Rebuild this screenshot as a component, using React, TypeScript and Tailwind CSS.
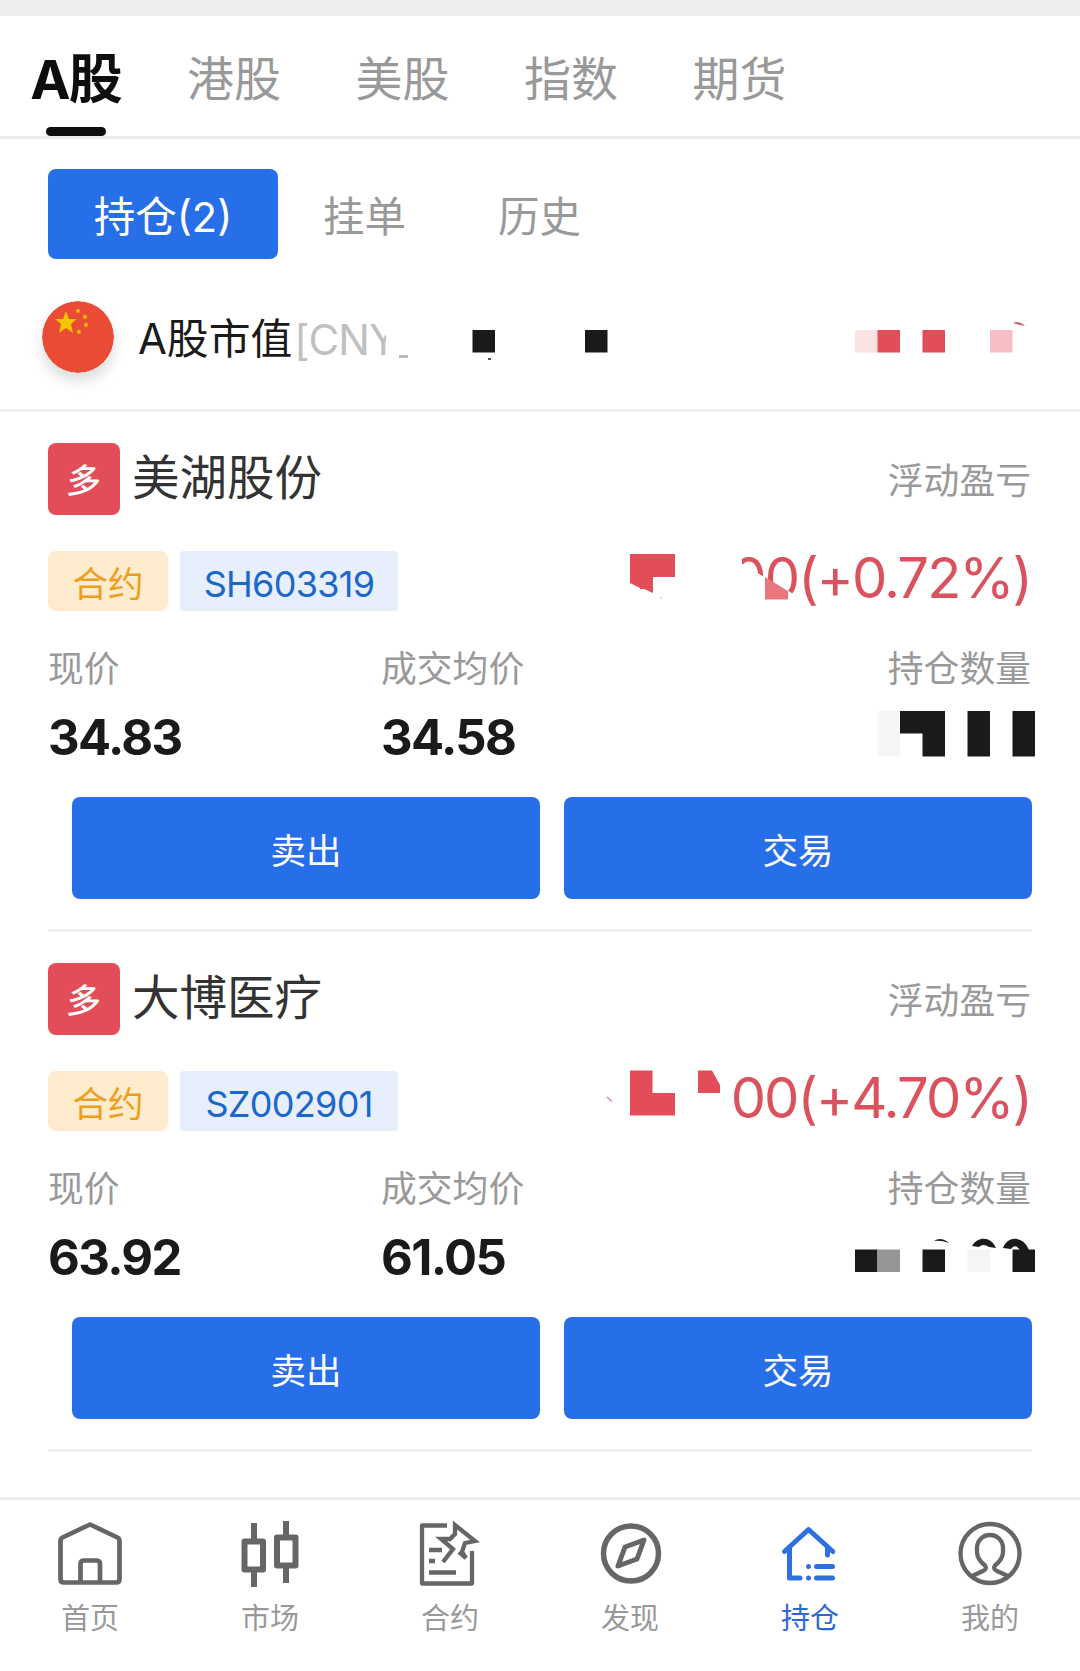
import type { ReactNode } from "react";

interface Tab {
  label: string;
  icon: ReactNode;
}

interface Position {
  name: string;
  code: string;
  profit: string;
  price: string;
  average: string;
  profitMask: ReactNode;
  amountMask: ReactNode;
}

const MARKETS = ["港股", "美股", "指数", "期货"];

const POSITIONS: Position[] = [
  {
    name: "美湖股份",
    code: "SH603319",
    profit: "00(+0.72%)",
    price: "34.83",
    average: "34.58",
    // Coordinates are relative to x=600 and the top of the row
    profitMask: (
      <>
        <path d="M125 0H142V18L197 50V70H125Z" fill="#fff" />
        <path d="M165 31L188 45V53.500H165Z" fill="#e8767f" />
        <path d="M30 8H75V31H53V47L44 43H40V42L30 37Z" fill="#e34d59" />
        <circle cx="61" cy="52" r="1" fill="#f2c4c8" />
      </>
    ),
    amountMask: (
      <>
        <path d="M27.500 5H50V50.500H27.500Z" fill="#f6f6f6" />
        <path d="M50 5H95V50.500H72.500V27.500H50ZM117.500 5H140V50.500H117.500ZM162.500 5H185V50.500H162.500Z" fill="#1a1a1a" />
      </>
    ),
  },
  {
    name: "大博医疗",
    code: "SZ002901",
    profit: "00(+4.70%)",
    price: "63.92",
    average: "61.05",
    profitMask: (
      <>
        <path d="M30 4.500H52.500V27H75V49.500H30ZM98 4.500H112L120 19V27H98Z" fill="#e34d59" />
        <path d="M7 31L12 35.500" stroke="#e8868e" strokeWidth="1.500" />
      </>
    ),
    amountMask: (
      <>
        <path d="M5 23.500H27.500V46H5ZM72.500 23.500H95V46H72.500ZM162.500 23.500H185V46H162.500Z" fill="#1a1a1a" />
        <path d="M27.500 23.500H50V46H27.500Z" fill="#969696" />
        <path d="M117.500 23.500H140V46H117.500Z" fill="#f5f5f5" />
        <path d="M84 15Q91 10 99 17Q91 14 84 15ZM122 20C128 10 141 10 146 22L139 21Q133 17 129 21ZM153 22C158 9 174 10 179 24H170Q165 17 161 23Z" fill="#1a1a1a" />
      </>
    ),
  },
];

const TABS: Tab[] = [
  {
    label: "首页",
    icon: (
      <g strokeWidth="4.700" strokeLinejoin="round">
        <path d="M40 8.500L67.500 21.500Q69.500 22.500 69.500 25V63Q69.500 66.500 66 66.500H14Q10.500 66.500 10.500 63V25Q10.500 22.500 12.500 21.500Z" />
        <path d="M30.500 66V48Q30.500 44.500 34 44.500H46Q50 44.500 50 48V66" />
      </g>
    ),
  },
  {
    label: "市场",
    icon: (
      <g strokeWidth="6">
        <path d="M24 7V25M24 55V71M56 5V21M56 51V67" />
        <path d="M14.500 25.500H33V53.500H14.500ZM47 21.500H65.500V49.500H47Z" strokeLinejoin="round" />
      </g>
    ),
  },
  {
    label: "合约",
    icon: (
      <g strokeWidth="4.300">
        <path d="M37 9.500H12V67.500H62V35" strokeLinejoin="round" />
        <path d="M19 34H32M19 45H25M19 56.500H46" />
        <path d="M33 46L43 33L31 23H40L45 18V9L65 25L55 27L52 36L56 42L49 36" />
      </g>
    ),
  },
  {
    label: "发现",
    icon: (
      <g strokeWidth="5.500">
        <circle cx="41" cy="37.500" r="27.500" />
        <path d="M54 24L35 31L28 50L47 43Z" strokeWidth="5" strokeLinejoin="round" />
      </g>
    ),
  },
  {
    label: "持仓",
    icon: (
      <g strokeWidth="5" strokeLinecap="round" strokeLinejoin="round">
        <path d="M14.500 35.500L38.500 13.500L62.800 35.500M19.500 32V62H30M57.500 32V39" />
        <path d="M38.500 50.500V50.500M46.500 50.500H62.500M38.500 62V62M46.500 62H62.500" />
      </g>
    ),
  },
  {
    label: "我的",
    icon: (
      <g strokeWidth="4.300">
        <circle cx="40" cy="37.500" r="29.500" />
        <path d="M22 60L33 55Q37.500 53 35 49.500Q27 43 27 36V32A13 13 0 0 1 53 32V36Q53 43 45 49.500Q42.500 53 47 55L58 60" />
      </g>
    ),
  },
];

function FlagIcon() {
  return (
    <svg
      className="h-[72px] w-[72px] shrink-0 rounded-full shadow-[0_8px_14px_rgba(0,0,0,0.14)]"
      viewBox="0 0 72 72"
    >
      <circle cx="36" cy="36" r="36" fill="#e94b35" />
      <g fill="#f2c500">
        <path d="M24 10L27 18H35L29 23L31 32L24 27L17 32L19 23L13 18H21Z" />
        <path id="star" d="M36 7l.8 1.800 2 .2-1.500 1.300.4 2-1.700-1-1.700 1 .4-2-1.500-1.300 2-.2z" />
        <use href="#star" x="7" y="6" />
        <use href="#star" x="8" y="14" />
        <use href="#star" x="1" y="21" />
      </g>
    </svg>
  );
}

function PositionCard({ position }: { position: Position }) {
  return (
    <section className="mx-12 flex h-[520px] flex-col border-b-3 border-[#efefef] pt-[31px]">
      <div className="flex h-[72px] items-center">
        <span className="flex h-[72px] w-[72px] items-center justify-center rounded-lg bg-[#e34d59] text-[34px] font-medium text-white">
          <span className="translate-y-[2px] -skew-x-6">多</span>
        </span>
        <h2 className="ml-3 pb-[2px] text-[47.5px] leading-[70px] text-[#333]">{position.name}</h2>
        <span className="mr-px ml-auto pt-[6px] text-[35.8px] text-[#999]">浮动盈亏</span>
      </div>

      <div className="relative mt-9 flex h-[60px] items-center">
        <span className="flex h-[60px] w-[120px] items-center justify-center rounded-lg bg-[#ffeccf] pt-[7px] text-[35.5px] text-[#eb9f1c]">
          合约
        </span>
        <span className="ml-3 flex h-[60px] w-[218px] items-center justify-center rounded bg-[#e7effd] pt-[5px] text-[36px] tracking-[-0.7px] text-[#1c67c9]">
          {position.code}
        </span>
        <span className="mr-px ml-auto pb-[7px] text-[56px] tracking-[-1.9px] text-[#d9525d]">
          {position.profit}
        </span>
        <svg className="absolute -top-[5px] left-[552px] h-[70px] w-[432px]" viewBox="0 0 432 70">
          {position.profitMask}
        </svg>
      </div>

      <div className="mt-[31px] flex h-[54px] items-center pt-px text-[35.8px] text-[#999]">
        <span className="w-[333px]">现价</span>
        <span>成交均价</span>
        <span className="mr-px ml-auto">持仓数量</span>
      </div>
      <div className="relative mt-[10px] flex h-[60px] items-center pt-[2px] text-[49px] font-bold tracking-[-1.6px] text-[#1a1a1a]">
        <span className="w-[333px]">{position.price}</span>
        <span>{position.average}</span>
        <svg className="absolute top-0 left-[802px] h-[60px] w-[185px]" viewBox="0 0 185 60">
          {position.amountMask}
        </svg>
      </div>

      <div className="mt-[31px] ml-6 flex gap-6 text-[35.5px] text-white">
        <button className="h-[102px] flex-1 rounded-lg bg-[#276fe8] pt-[7px]">卖出</button>
        <button className="h-[102px] flex-1 rounded-lg bg-[#276fe8] pt-[7px]">交易</button>
      </div>
    </section>
  );
}

export default function App() {
  return (
    <div className="flex h-[1671px] w-[1080px] flex-col overflow-hidden bg-white font-['Inter','Noto_Sans_CJK_SC',sans-serif] leading-none">
      <div className="h-4 bg-[#ededed]" />

      <nav className="flex h-[123px] border-b-3 border-[#eee] text-[47px] text-[#999]">
        <div className="flex w-[151px] flex-col items-center">
          <span className="mt-[36px] text-[54px] leading-[56px] font-bold tracking-[-2px] text-[#0e0e0e]">A股</span>
          <span className="mt-[19px] h-[9px] w-[60px] rounded-full bg-[#0e0e0e]" />
        </div>
        {MARKETS.map((market) => (
          <span key={market} className="ml-9 w-[132.5px] pt-[39px]">
            {market}
          </span>
        ))}
      </nav>

      <div className="mt-[30px] flex h-[90px] items-center text-[41.5px] text-[#999]">
        <span className="ml-12 flex h-[90px] w-[230px] items-center justify-center rounded-lg bg-[#276fe8] pt-[7px] text-white">
          持仓(2)
        </span>
        <span className="ml-[45px] w-[175px] pt-[7px]">挂单</span>
        <span className="pt-[7px]">历史</span>
      </div>

      <div className="relative flex h-[153px] items-center border-b-3 border-[#efefef] pt-[6px] pl-[42px]">
        <FlagIcon />
        <span className="ml-6 pt-[6px] text-[41.8px] text-[#1a1a1a]">A股市值</span>
        <span className="ml-[2px] pt-[6px] text-[42px] tracking-[-1px] text-[#c0c0c0]">[CNY</span>
        {/* Mosaic over the hidden balance */}
        <svg className="absolute top-[50px] left-[380px] h-[60px] w-[680px]" viewBox="0 0 680 60">
          <path d="M6 0H24V45H6Z" fill="#fff" />
          <path d="M19 46H28V49H19Z" fill="#bbb" />
          <path d="M92.500 21H115V43.500H92.500ZM205 21H227.500V43.500H205Z" fill="#1a1a1a" />
          <path d="M108 49H111V51H108Z" fill="#555" />
          <path d="M475 21H497.500V43.500H475Z" fill="#f9e3e5" />
          <path d="M497.500 21H520V43.500H497.500ZM542.500 21H565V43.500H542.500Z" fill="#e34d59" />
          <path d="M610 21H632.500V43.500H610Z" fill="#f5bec4" />
          <path d="M633 14Q639 11 645 17Q639 16 633 14Z" fill="#c96870" />
        </svg>
      </div>

      {POSITIONS.map((position) => (
        <PositionCard key={position.code} position={position} />
      ))}

      <footer className="mt-auto grid h-[174px] grid-cols-6 border-t-3 border-[#eee] text-[29px] text-[#999]">
        {TABS.map((tab) => (
          <div key={tab.label} className={`flex flex-col items-center ${tab.label === "持仓" ? "text-[#2d69d6]" : ""}`}>
            <svg
              className={`mt-[16px] h-[80px] w-[80px] ${tab.label === "持仓" ? "text-[#2f6fe0]" : "text-[#666]"}`}
              viewBox="0 0 80 80"
              fill="none"
              stroke="currentColor"
            >
              {tab.icon}
            </svg>
            <span className="mt-[8px]">{tab.label}</span>
          </div>
        ))}
      </footer>
    </div>
  );
}
